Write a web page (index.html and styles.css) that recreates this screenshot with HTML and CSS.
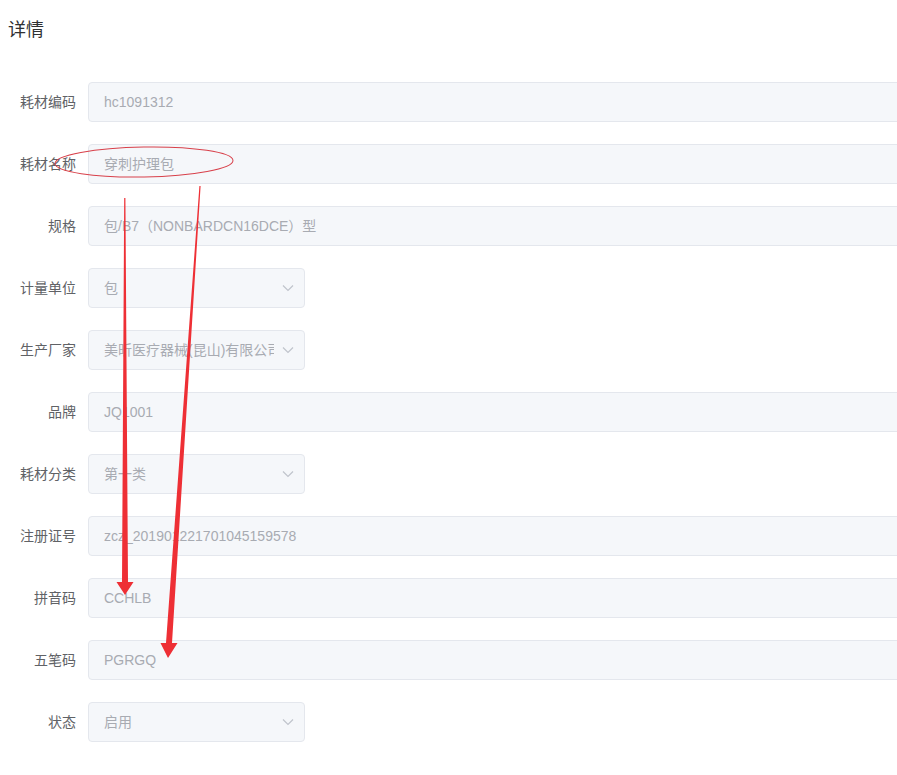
FILE: index.html
```html
<!DOCTYPE html>
<html lang="zh">
<head>
<meta charset="utf-8">
<title>详情</title>
<link rel="stylesheet" href="styles.css">
</head>
<body>
<div class="page">
  <div class="title">详情</div>
  <form class="form">
    <div class="form-item"><label class="label">耗材编码</label><div class="input">hc1091312</div></div>
    <div class="form-item"><label class="label">耗材名称</label><div class="input">穿刺护理包</div></div>
    <div class="form-item"><label class="label">规格</label><div class="input">包/B7（NONBARDCN16DCE）型</div></div>
    <div class="form-item"><label class="label">计量单位</label><div class="input select"><span class="val">包</span><svg class="arrow" width="12" height="8" viewBox="0 0 12 8"><polyline points="1,1.5 6,6.5 11,1.5" fill="none" stroke="#c0c4cc" stroke-width="1.2"/></svg></div></div>
    <div class="form-item"><label class="label">生产厂家</label><div class="input select"><span class="val">美昕医疗器械(昆山)有限公司</span><svg class="arrow" width="12" height="8" viewBox="0 0 12 8"><polyline points="1,1.5 6,6.5 11,1.5" fill="none" stroke="#c0c4cc" stroke-width="1.2"/></svg></div></div>
    <div class="form-item"><label class="label">品牌</label><div class="input">JQ1001</div></div>
    <div class="form-item"><label class="label">耗材分类</label><div class="input select"><span class="val">第一类</span><svg class="arrow" width="12" height="8" viewBox="0 0 12 8"><polyline points="1,1.5 6,6.5 11,1.5" fill="none" stroke="#c0c4cc" stroke-width="1.2"/></svg></div></div>
    <div class="form-item"><label class="label">注册证号</label><div class="input">zcz_201901221701045159578</div></div>
    <div class="form-item"><label class="label">拼音码</label><div class="input">CCHLB</div></div>
    <div class="form-item"><label class="label">五笔码</label><div class="input">PGRGQ</div></div>
    <div class="form-item"><label class="label">状态</label><div class="input select"><span class="val">启用</span><svg class="arrow" width="12" height="8" viewBox="0 0 12 8"><polyline points="1,1.5 6,6.5 11,1.5" fill="none" stroke="#c0c4cc" stroke-width="1.2"/></svg></div></div>
  </form>
</div>
<svg class="marks" width="897" height="775" viewBox="0 0 897 775">
  <ellipse cx="144" cy="162" rx="89" ry="15" fill="none" stroke="#d8404a" stroke-width="1" transform="rotate(-1 144 162)"/>
  <polygon points="124.2,198 125.4,198 128,582 133.5,582 125,595 116.5,582 122,582" fill="#ee2f35"/>
  <polygon points="199.4,186 200.6,186 172,643 177.5,643 168,658 160.5,643 166,643" fill="#ee2f35"/>
</svg>
</body>
</html>
```

FILE: styles.css
```css
html, body {
  margin: 0;
  padding: 0;
  overflow: hidden;
}
body {
  font-family: "Liberation Sans", "Noto Sans CJK SC", sans-serif;
  background: #ffffff;
  position: relative;
  width: 897px;
  height: 775px;
}
.page {
  padding: 8px 0 0 8px;
}
.title {
  font-size: 18px;
  line-height: 44px;
  color: #303133;
}
.form {
  margin-top: 30px;
}
.form-item {
  display: flex;
  margin-bottom: 22px;
}
.label {
  flex: 0 0 80px;
  box-sizing: border-box;
  padding-right: 12px;
  text-align: right;
  font-size: 14px;
  line-height: 40px;
  color: #606266;
}
.input {
  box-sizing: border-box;
  height: 40px;
  width: 1000px;
  flex: 0 0 auto;
  border: 1px solid #e4e7ed;
  border-radius: 4px;
  background: #f5f7fa;
  color: #a8abb2;
  font-size: 14px;
  line-height: 38px;
  padding: 0 15px;
  white-space: nowrap;
  overflow: hidden;
}
.select {
  width: 217px;
  display: flex;
  align-items: center;
  padding-right: 10px;
}
.select .val {
  flex: 1;
  overflow: hidden;
  white-space: nowrap;
  margin-right: 8px;
}
.arrow {
  flex: 0 0 auto;
}
.marks {
  position: absolute;
  left: 0;
  top: 0;
  pointer-events: none;
}
```
